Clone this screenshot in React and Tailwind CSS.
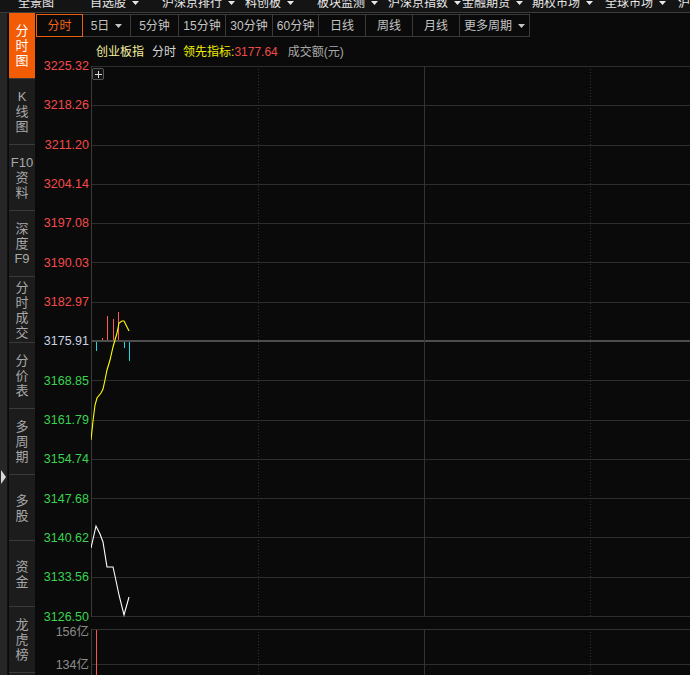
import React from 'react';

const menu = [
  { label: '全景图', w: 'w-[72px]' },
  { label: '自选股', w: 'w-[72px]', caret: true },
  { label: '沪深京排行', w: 'w-[83px]', caret: true },
  { label: '科创板', w: 'w-[72px]', caret: true },
  { label: '板块监测', w: 'w-[71px]', caret: true },
  { label: '沪深京指数', w: 'w-[74px]', caret: true },
  { label: '金融期货', w: 'w-[70px]', caret: true },
  { label: '期权市场', w: 'w-[73px]', caret: true },
  { label: '全球市场', w: 'w-[73px]', caret: true },
  { label: '沪深', w: 'w-[40px]' },
];

const periods = [
  { label: '分时', w: 'w-[47px]', active: true },
  { label: '5日', w: 'w-[48px]', caret: true },
  { label: '5分钟', w: 'w-[48px]' },
  { label: '15分钟', w: 'w-[47px]' },
  { label: '30分钟', w: 'w-[47px]' },
  { label: '60分钟', w: 'w-[46px]' },
  { label: '日线', w: 'w-[47px]' },
  { label: '周线', w: 'w-[47px]' },
  { label: '月线', w: 'w-[47px]' },
  { label: '更多周期', w: 'w-[70px]', caret: true },
];

const sideTabs = [
  ['分', '时', '图'],
  ['K', '线', '图'],
  ['F10', '资', '料'],
  ['深', '度', 'F9'],
  ['分', '时', '成', '交'],
  ['分', '价', '表'],
  ['多', '周', '期'],
  ['多', '股'],
  ['资', '金'],
  ['龙', '虎', '榜'],
];

const prices = [
  '3225.32', '3218.26', '3211.20', '3204.14', '3197.08', '3190.03', '3182.97',
  '3175.91',
  '3168.85', '3161.79', '3154.74', '3147.68', '3140.62', '3133.56', '3126.50',
];

const gridYs = prices.map((_, i) => Math.round(66 + (i * 550) / 14));

// leading indicator (yellow) and index (white) traces, page coordinates
const yellowPts = [
  [91, 440], [93, 421], [95, 405], [97, 398], [101, 393], [103, 389], [105, 380],
  [107, 370], [110, 360], [113, 347], [115, 340], [117, 333], [119, 323],
  [122, 321], [124, 321], [127, 327], [129, 331],
];
const whitePts = [
  [91, 548], [96, 526], [100, 534], [103, 542], [107, 567], [113, 567],
  [115, 576], [119, 595], [124, 615], [129, 597],
];

const upBars = [[102, 338], [107, 316], [113, 319], [118, 312]];
const downBars = [[96, 351], [124, 348], [129, 361]];

const pts = (list) => list.map(([x, y]) => `${x},${y}`).join(' ');

function Caret({ color = '#e8e8e8' }) {
  return (
    <svg width="7" height="4" viewBox="0 0 7 4" className="ml-[6px]">
      <path d="M0 0 L7 0 L3.5 4 Z" fill={color} />
    </svg>
  );
}

function VerticalGrid({ y1, y2 }) {
  return (
    <>
      <line x1="91.5" y1={y1} x2="91.5" y2={y2} stroke="#3a3a3a" />
      <line x1="258.5" y1={y1} x2="258.5" y2={y2} stroke="#333333" strokeDasharray="1 2" />
      <line x1="424.5" y1={y1} x2="424.5" y2={y2} stroke="#333333" />
      <line x1="590.5" y1={y1} x2="590.5" y2={y2} stroke="#333333" strokeDasharray="1 2" />
    </>
  );
}

function PriceChart() {
  return (
    <svg width="599" height="551" viewBox="91 66 599 551" shapeRendering="crispEdges" className="block">
      {gridYs.map((y, i) =>
        i === 7 ? (
          <line key={y} x1="91" y1={y} x2="690" y2={y} stroke="#4d4d4d" strokeWidth="2" />
        ) : (
          <line key={y} x1="91" y1={y + 0.5} x2="690" y2={y + 0.5} stroke="#2e2e2e" />
        )
      )}
      <VerticalGrid y1={66} y2={617} />

      {upBars.map(([x, top]) => (
        <line key={x} x1={x + 0.5} y1="340" x2={x + 0.5} y2={top} stroke="#ff5a5a" />
      ))}
      {downBars.map(([x, bottom]) => (
        <line key={x} x1={x + 0.5} y1="342" x2={x + 0.5} y2={bottom} stroke="#1ed6ea" />
      ))}

      <polyline points={pts(yellowPts)} fill="none" stroke="#ffff00" strokeWidth="1.1" shapeRendering="auto" />
      <polyline points={pts(whitePts)} fill="none" stroke="#ffffff" strokeWidth="1.1" shapeRendering="auto" />

      <rect x="92.5" y="68.5" width="11" height="11" rx="2" fill="#141414" stroke="#555555" />
      <line x1="95" y1="74.5" x2="102" y2="74.5" stroke="#dddddd" />
      <line x1="98.5" y1="71" x2="98.5" y2="78" stroke="#dddddd" />
    </svg>
  );
}

function VolumeChart() {
  return (
    <svg width="599" height="46" viewBox="91 629 599 46" shapeRendering="crispEdges" className="block">
      <line x1="91" y1="629.5" x2="690" y2="629.5" stroke="#333333" />
      <line x1="91" y1="664.5" x2="690" y2="664.5" stroke="#2e2e2e" />
      <VerticalGrid y1={629} y2={675} />
      <line x1="96.5" y1="630" x2="96.5" y2="675" stroke="#ff5050" />
    </svg>
  );
}

export default function App() {
  return (
    <div className="w-[690px] h-[675px] overflow-hidden bg-[#0a0a0a] flex flex-col font-['Liberation_Sans','Noto_Sans_CJK_SC',sans-serif] text-[12px]">
      {/* top market menu, clipped at the top edge */}
      <div className="h-[13px] shrink-0 overflow-hidden bg-[#141414] border-b border-[#3c3c3c] flex pl-[18px]">
        {menu.map((m) => (
          <div key={m.label} className={`${m.w} shrink-0 flex items-center h-[12px] -mt-[3px] leading-[12px] text-[#e8e8e8] whitespace-nowrap`}>
            <span>{m.label}</span>
            {m.caret && <Caret />}
          </div>
        ))}
      </div>

      <div className="flex flex-1 min-h-0">
        {/* left collapse strip */}
        <div className="w-[8px] shrink-0 bg-[#262626] border-r border-[#111111] flex flex-col items-center pt-[457px]">
          <svg width="5" height="14" viewBox="0 0 5 14">
            <path d="M0 0 L5 7 L0 14 Z" fill="#d8d8d8" />
          </svg>
        </div>

        {/* side tabs */}
        <div className="w-[26px] shrink-0 ml-[1px] flex flex-col bg-[#1c1c1c]">
          {sideTabs.map((lines, i) => (
            <div
              key={i}
              className={`h-[66px] shrink-0 border-b border-[#3a3a3a] flex flex-col items-center justify-center text-[13px] leading-[15px] ${
                i === 0 ? 'bg-[#f25c05] text-white' : 'text-[#a8a8a8]'
              }`}
            >
              {lines.map((t, j) => (
                <span key={j}>{t}</span>
              ))}
            </div>
          ))}
        </div>

        {/* main */}
        <div className="flex-1 min-w-0 flex flex-col pt-[1px]">
          <div className="flex ml-[1px] h-[23px] shrink-0">
            {periods.map((p) => (
              <div
                key={p.label}
                className={`${p.w} shrink-0 flex items-center justify-center whitespace-nowrap ${
                  p.active
                    ? 'border border-[#e8600e] text-[#f0641a]'
                    : 'border-y border-r border-[#3a3a3a] text-[#c4c4c4]'
                }`}
              >
                <span>{p.label}</span>
                {p.caret && <Caret color="#c4c4c4" />}
              </div>
            ))}
          </div>

          <div className="h-[29px] shrink-0 flex items-center pl-[61px] whitespace-nowrap">
            <span className="text-[#f4f0a0]">创业板指</span>
            <span className="ml-[8px] text-[#d4d4d4]">分时</span>
            <span className="ml-[7px] text-[#f0f000]">领先指标:</span>
            <span className="text-[#ee4c4c]">3177.64</span>
            <span className="ml-[10px] text-[#a8a8a8]">成交额(元)</span>
          </div>

          {/* price section */}
          <div className="flex h-[551px] shrink-0 items-start">
            <div className="w-[56px] shrink-0 h-[565px] -mt-[7px] flex flex-col justify-between pr-[2px] text-[12.5px]">
              {prices.map((p, i) => (
                <div
                  key={p}
                  className={`h-[14px] leading-[14px] text-right ${
                    i < 7 ? 'text-[#f44a4a]' : i === 7 ? 'text-[#c8d4e2]' : 'text-[#3ad350]'
                  }`}
                >
                  {p}
                </div>
              ))}
            </div>
            <PriceChart />
          </div>

          {/* volume section */}
          <div className="flex mt-[12px] h-[46px] shrink-0 items-start">
            <div className="w-[56px] shrink-0 -mt-[4px] flex flex-col pr-[2px] text-[#8c8c8c] text-[12.5px]">
              <div className="h-[14px] leading-[14px] text-right">156亿</div>
              <div className="h-[14px] leading-[14px] text-right mt-[19px]">134亿</div>
            </div>
            <VolumeChart />
          </div>
        </div>
      </div>
    </div>
  );
}
